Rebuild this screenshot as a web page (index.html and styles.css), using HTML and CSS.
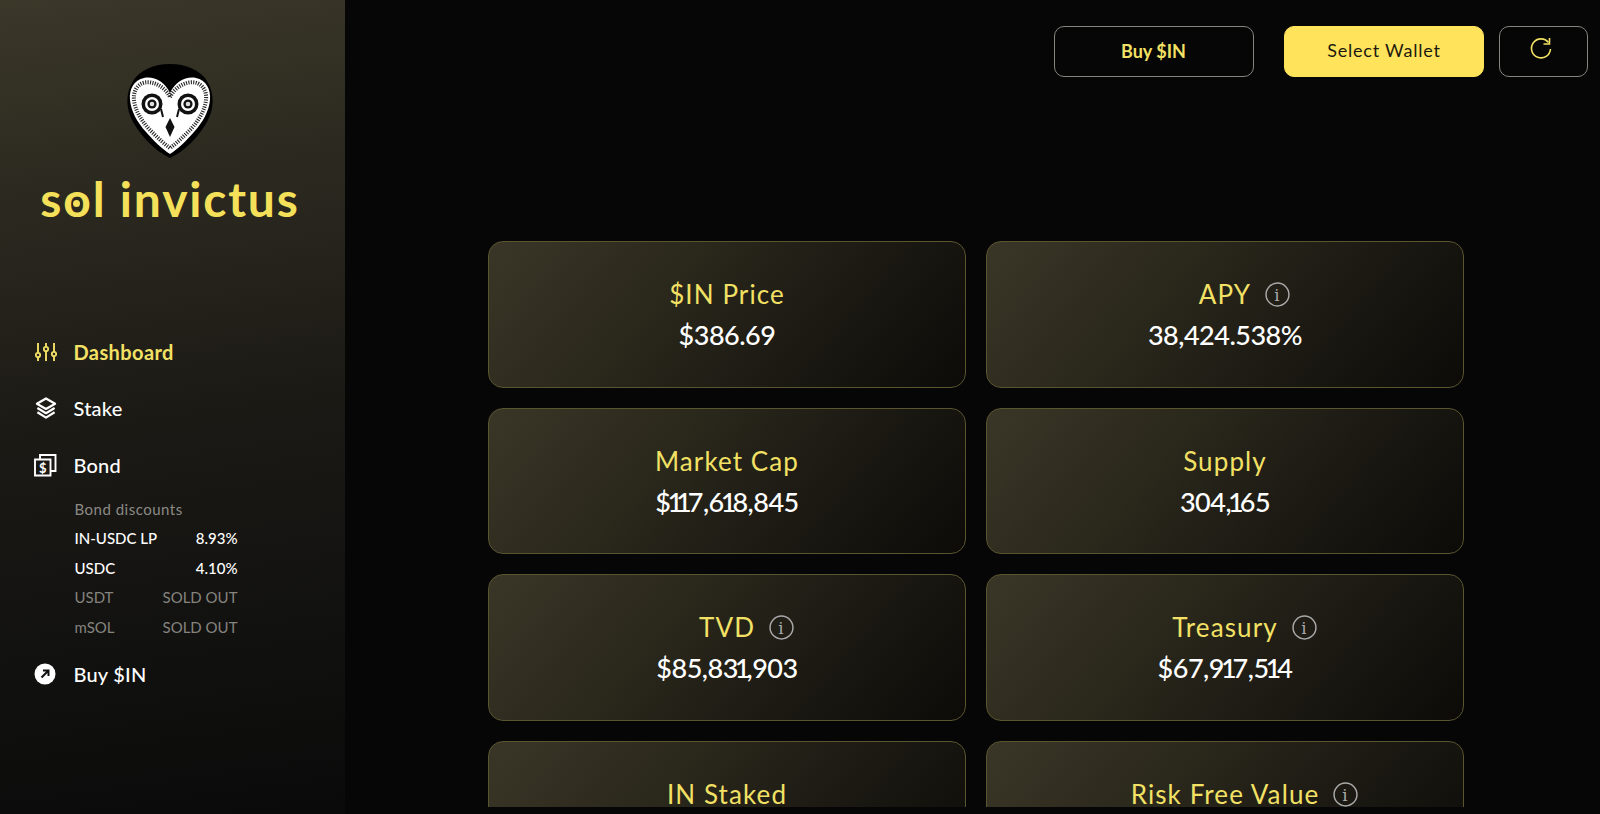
FILE: index.html
```html
<!DOCTYPE html>
<html lang="en">
<head>
<meta charset="utf-8">
<title>Sol Invictus</title>
<link rel="stylesheet" href="styles.css">
</head>
<body>
<aside class="sidebar">
  <div class="brand">
    <svg class="owl" viewBox="0 0 92 96" aria-hidden="true">
      <path d="M46 1C62 1 76 7 83 18C91 31 90 46 83 59C75 73 61 88 46 95C31 88 17 73 9 59C2 46 1 31 9 18C16 7 30 1 46 1Z" fill="#000"/>
      <path d="M46 30C51 19 62 13 72 15C82 17 87 26 86 37C85 48 79 59 70 69C63 77 54 86 46 91C38 86 29 77 22 69C13 59 7 48 6 37C5 26 10 17 20 15C30 13 41 19 46 30Z" fill="#fff"/>
      <path d="M46 34C51 24 62 18 71 19.500C79 21 83 29 82 37C81 47 75 57 67 66C60 73 53 80 46 85C39 80 32 73 25 66C17 57 11 47 10 37C9 29 13 21 21 19.500C30 18 41 24 46 34Z" fill="none" stroke="#262626" stroke-width="4" stroke-dasharray="1.100 1.300"/>
      <path d="M37 46L39 54M55 46L53 54" fill="none" stroke="#111" stroke-width="2"/>
      <circle cx="28" cy="41" r="10.500" fill="#111"/><circle cx="28" cy="41" r="7" fill="#fff"/><circle cx="28" cy="41" r="4.600" fill="#111"/><circle cx="28" cy="41" r="2.300" fill="#ddd"/>
      <circle cx="64" cy="41" r="10.500" fill="#111"/><circle cx="64" cy="41" r="7" fill="#fff"/><circle cx="64" cy="41" r="4.600" fill="#111"/><circle cx="64" cy="41" r="2.300" fill="#ddd"/>
      <path d="M46 55L50.500 64L46 74L41.500 64Z" fill="#111"/>
    </svg>
    <div class="wordmark">s<span class="wordmark-o">o</span>l invictus</div>
  </div>
  <nav class="nav">
    <a class="nav-item is-active">
      <svg class="nav-icon" viewBox="0 0 22 22" aria-hidden="true"><g fill="none" stroke="#f2e164" stroke-width="1.900"><path d="M3 2v18M11 2v18M19 2v18"/></g><g fill="#2a2820" stroke="#f2e164" stroke-width="1.800"><circle cx="3" cy="14" r="2.200"/><circle cx="11" cy="8" r="2.200"/><circle cx="19" cy="13" r="2.200"/></g></svg>
      <span>Dashboard</span>
    </a>
    <a class="nav-item">
      <svg class="nav-icon" viewBox="0 0 22 23" aria-hidden="true"><g fill="none" stroke="#fff" stroke-width="2.300" stroke-linejoin="round"><path d="M11 1.500L20.500 7L11 12.500L1.500 7Z"/><path d="M2 11.500L11 17L20 11.500"/><path d="M2 16L11 21.500L20 16"/></g></svg>
      <span>Stake</span>
    </a>
    <a class="nav-item">
      <svg class="nav-icon nav-icon-wide" viewBox="0 0 24 24" aria-hidden="true"><g fill="none" stroke="#fff" stroke-width="1.900"><path d="M7 6V2h15.500v16H18"/><path d="M2 6.500H17.500V22.500H2Z"/></g><text class="bond-dollar" x="9.800" y="19.500">$</text></svg>
      <span>Bond</span>
    </a>
    <div class="bonds">
      <div class="bonds-title">Bond discounts</div>
      <div class="bond-row is-open"><span>IN-USDC LP</span><span>8.93%</span></div>
      <div class="bond-row is-open"><span>USDC</span><span>4.10%</span></div>
      <div class="bond-row"><span>USDT</span><span>SOLD OUT</span></div>
      <div class="bond-row"><span>mSOL</span><span>SOLD OUT</span></div>
    </div>
    <a class="nav-item nav-buy">
      <svg class="nav-icon" viewBox="0 0 22 22" aria-hidden="true"><circle cx="11" cy="11" r="10.500" fill="#fff"/><path d="M7.500 14.500L14 8M9 7.500h5.500V13" fill="none" stroke="#111" stroke-width="2"/></svg>
      <span>Buy $IN</span>
    </a>
  </nav>
</aside>
<main class="main">
  <header class="topbar">
    <button class="btn btn-outline">Buy $IN</button>
    <button class="btn btn-solid">Select Wallet</button>
    <button class="btn btn-icon" aria-label="Refresh">
      <svg viewBox="0 0 24 24" aria-hidden="true"><path d="M19.500 5.500A9.500 9.500 0 1 0 21.500 12" fill="none" stroke="#f2e164" stroke-width="1.600"/><path d="M20.500 1v6h-6" fill="none" stroke="#f2e164" stroke-width="1.600"/></svg>
    </button>
  </header>
  <section class="cards">
    <div class="card"><div class="card-label">$IN Price</div><div class="card-value">$386.69</div></div>
    <div class="card"><div class="card-label">APY<svg class="info" viewBox="0 0 24 24" aria-hidden="true"><circle cx="12" cy="12" r="11" fill="none" stroke="#aaa" stroke-width="1.400"/><text x="12" y="18" class="info-i">i</text></svg></div><div class="card-value">38,424.538%</div></div>
    <div class="card"><div class="card-label">Market Cap</div><div class="card-value">$<span class="one">1</span><span class="one">1</span>7,6<span class="one">1</span>8,845</div></div>
    <div class="card"><div class="card-label">Supply</div><div class="card-value">304,<span class="one">1</span>65</div></div>
    <div class="card"><div class="card-label">TVD<svg class="info" viewBox="0 0 24 24" aria-hidden="true"><circle cx="12" cy="12" r="11" fill="none" stroke="#aaa" stroke-width="1.400"/><text x="12" y="18" class="info-i">i</text></svg></div><div class="card-value">$85,83<span class="one">1</span>,903</div></div>
    <div class="card"><div class="card-label">Treasury<svg class="info" viewBox="0 0 24 24" aria-hidden="true"><circle cx="12" cy="12" r="11" fill="none" stroke="#aaa" stroke-width="1.400"/><text x="12" y="18" class="info-i">i</text></svg></div><div class="card-value">$67,9<span class="one">1</span>7,5<span class="one">1</span>4</div></div>
    <div class="card"><div class="card-label">IN Staked</div></div>
    <div class="card"><div class="card-label">Risk Free Value<svg class="info" viewBox="0 0 24 24" aria-hidden="true"><circle cx="12" cy="12" r="11" fill="none" stroke="#aaa" stroke-width="1.400"/><text x="12" y="18" class="info-i">i</text></svg></div></div>
  </section>
</main>
</body>
</html>
```

FILE: styles.css
```css
* { box-sizing: border-box; }
html, body { margin: 0; height: 100%; }
body {
  display: flex;
  height: 814px;
  overflow: hidden;
  background: #060606;
  color: #fff;
  font-family: "Lato", "Open Sans", sans-serif;
}

/* sidebar */
.sidebar {
  flex: 0 0 345px;
  height: 814px;
  background: linear-gradient(172deg, #3b3729 0%, #2c2a20 22%, #1c1a15 50%, #111110 78%, #0a0a0a 100%);
}
.brand {
  display: flex;
  flex-direction: column;
  align-items: center;
  padding: 63px 5px 0 0;
}
.owl { width: 92px; height: 96px; display: block; }
.wordmark {
  margin-top: 12px;
  font-size: 48px;
  line-height: 56px;
  font-weight: 700;
  letter-spacing: 1.800px;
  color: #f5e05a;
  white-space: nowrap;
}
.wordmark-o { position: relative; display: inline-block; }
.wordmark-o::after {
  content: "";
  position: absolute;
  left: 50%;
  top: 58%;
  width: 7px;
  height: 7px;
  margin: -3.500px 0 0 -4.500px;
  border-radius: 50%;
  background: #f5e05a;
}
.nav { margin-top: 96.500px; padding-left: 35px; }
.nav-item {
  display: flex;
  align-items: center;
  height: 56.500px;
  font-size: 20px;
  font-weight: 500;
  letter-spacing: .2px;
  color: #fff;
}
.nav-item.is-active { color: #f2e164; font-weight: 700; letter-spacing: .4px; }
.nav-icon { width: 22px; height: 22px; margin-right: 16.500px; flex: none; }
.nav-icon-wide { width: 24px; height: 24px; margin-left: -2px; }
.nav-buy .nav-icon { margin-left: -1px; margin-right: 17.500px; }
.bond-dollar { font: 700 13px "Lato", sans-serif; fill: #fff; text-anchor: middle; }
.bonds { width: 163px; margin-left: 39.500px; padding-top: 2px; }
.bonds-title { font-size: 15px; line-height: 29px; letter-spacing: .5px; color: #8b8a85; }
.bond-row {
  display: flex;
  justify-content: space-between;
  font-size: 15px;
  line-height: 29.500px;
  color: #85847f;
}
.bond-row.is-open { color: #fff; font-weight: 500; }
.nav-buy { margin-top: 4px; }

/* main */
.main { flex: 1; height: 807px; overflow: hidden; }
.topbar {
  display: flex;
  justify-content: flex-end;
  gap: 30px;
  padding: 26px 12px 0 0;
}
.btn {
  height: 51px;
  border-radius: 10px;
  font-family: inherit;
  font-size: 18px;
  cursor: pointer;
}
.btn-outline {
  width: 200px;
  padding-bottom: 3px;
  padding-left: 5px;
  background: #060606;
  border: 1px solid #85857f;
  color: #f2e164;
  font-weight: 700;
}
.btn-solid {
  width: 200px;
  padding-bottom: 5px;
  background: #ffe35a;
  border: 1px solid #ffe35a;
  color: #1c1a10;
  letter-spacing: .8px;
}
.btn-icon {
  width: 89px;
  margin-left: -15px;
  padding: 0 5px 6px 0;
  background: #060606;
  border: 1px solid #85857f;
}
.btn-icon svg { width: 24px; height: 24px; display: block; margin: 0 auto; }
.cards {
  display: grid;
  grid-template-columns: 478px 478px;
  grid-auto-rows: 146.700px;
  gap: 20px;
  margin: 164px 0 0 143px;
}
.card {
  display: flex;
  flex-direction: column;
  align-items: center;
  padding-top: 34px;
  border: 1px solid #59552f;
  border-radius: 15px;
  background: linear-gradient(130deg, #3a3627 0%, #2b281c 35%, #1c1a13 65%, #0c0b08 100%);
}
.card-label {
  position: relative;
  font-size: 26px;
  line-height: 36px;
  color: #f2e164;
  letter-spacing: 1.100px;
}
.card-value {
  margin-top: 5px;
  font-size: 27px;
  line-height: 36px;
  font-weight: 500;
  letter-spacing: -.5px;
  color: #fff;
}
.card-value .one { letter-spacing: -4px; margin-left: -3px; }
.info {
  position: absolute;
  left: calc(100% + 14px);
  top: 5.500px;
  width: 25px;
  height: 25px;
}
.info-i { font: 400 16px "DejaVu Serif", serif; fill: #aaa; text-anchor: middle; }
```
